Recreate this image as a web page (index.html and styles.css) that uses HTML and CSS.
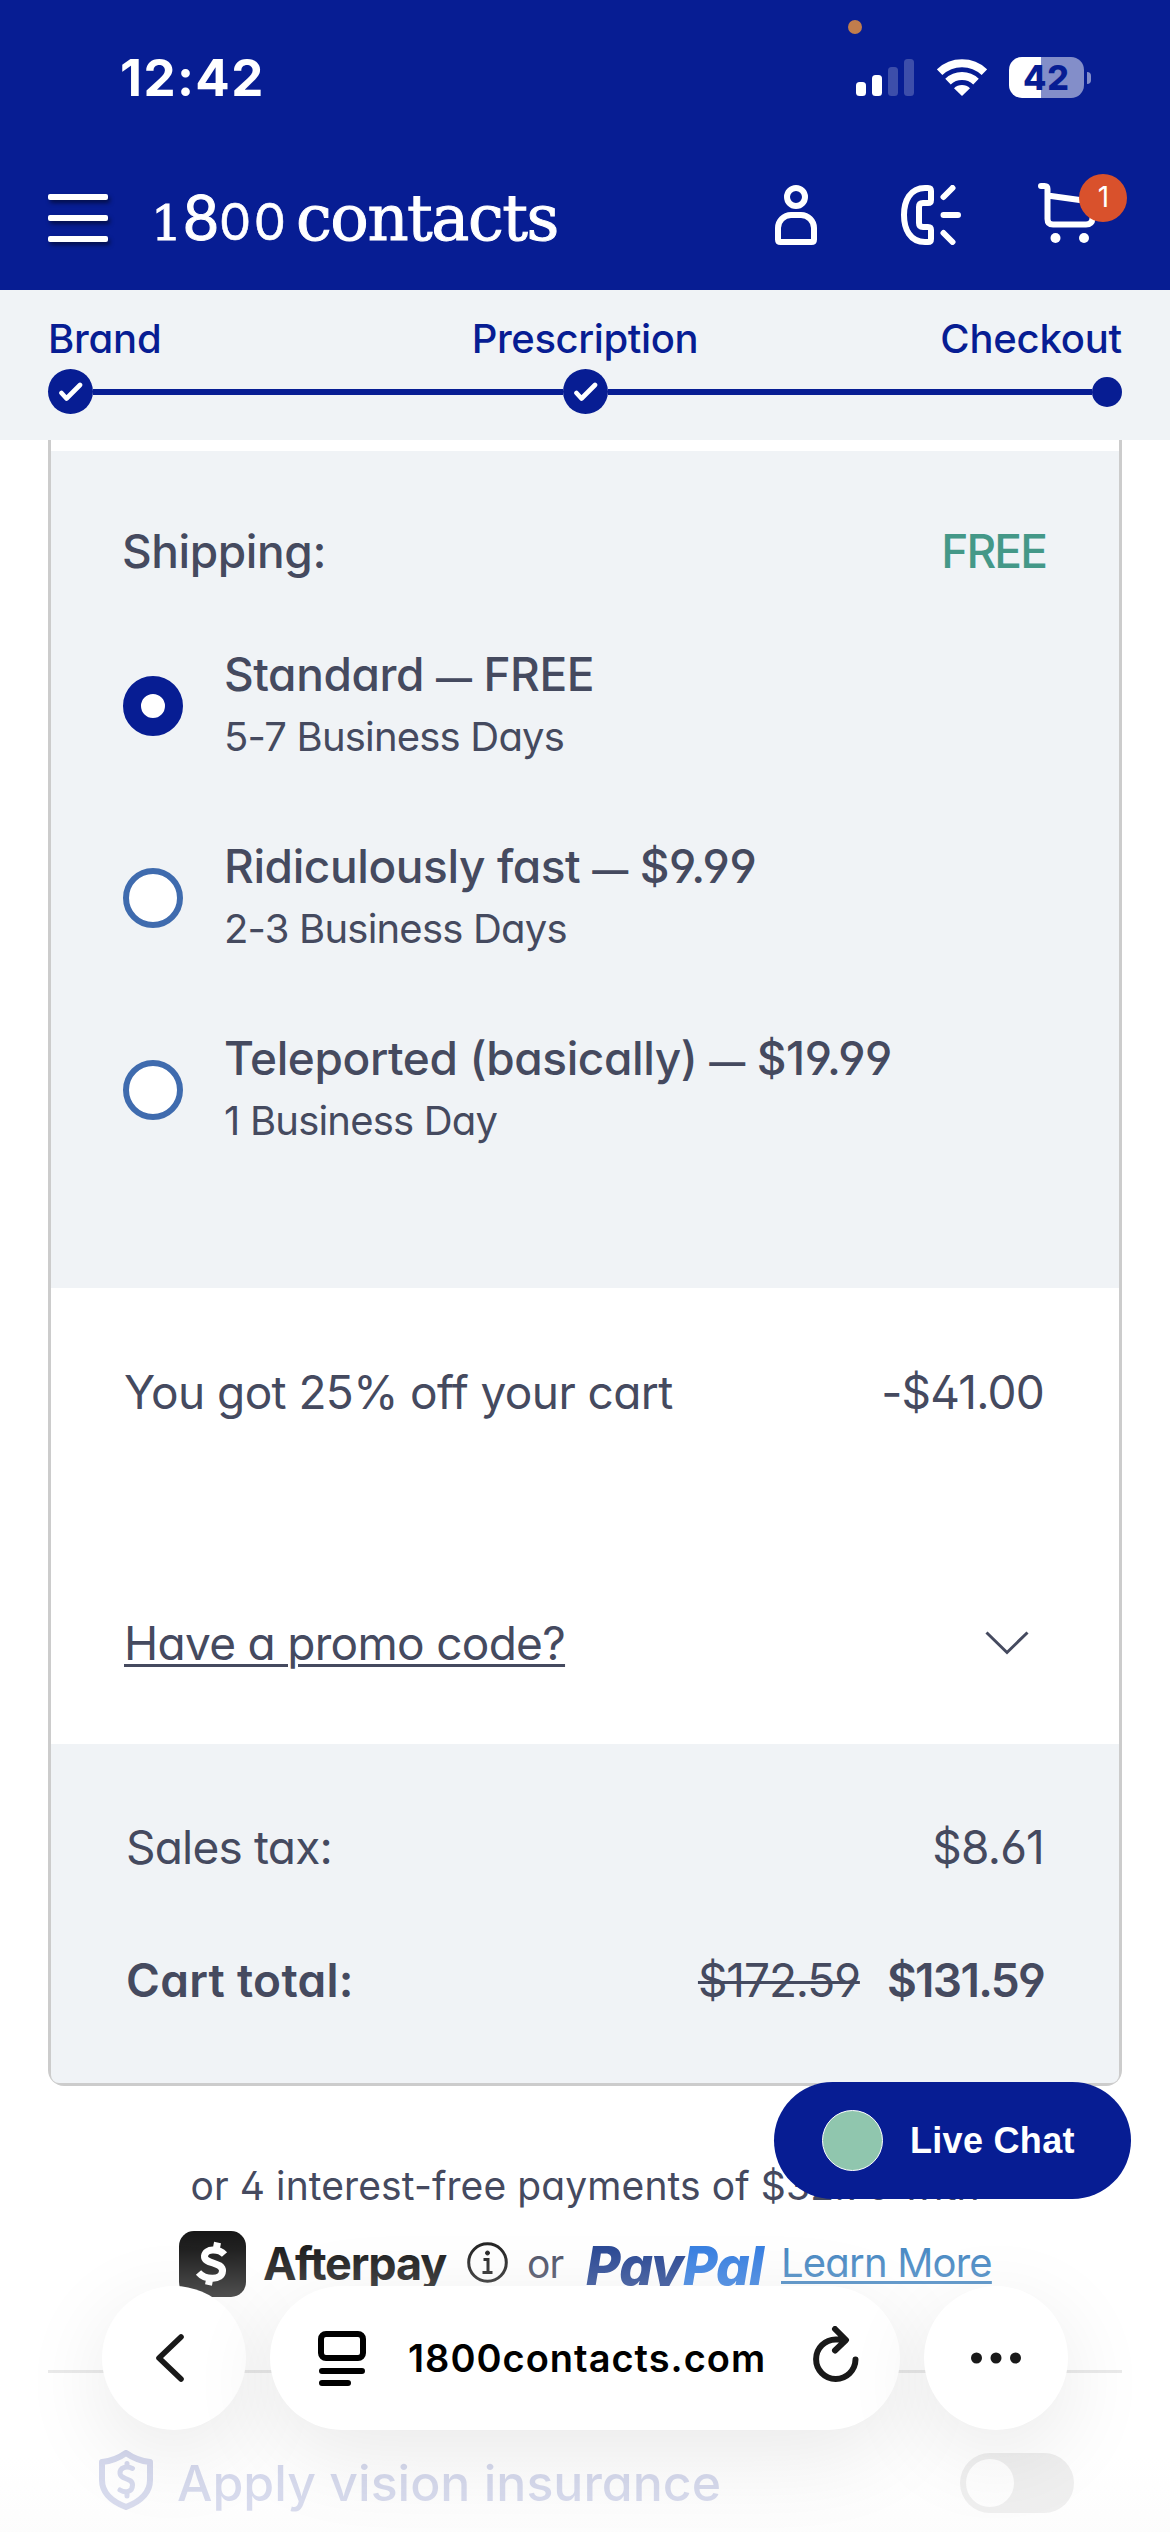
FILE: index.html
```html
<!DOCTYPE html>
<html lang="en">
<head>
<meta charset="utf-8">
<meta name="viewport" content="width=device-width">
<title>1800 contacts – Checkout</title>
<link rel="stylesheet" href="styles.css">
</head>
<body>
<div class="page">
  <header class="header">
    <span class="recording-dot"></span>
    <div class="status">
      <span class="status-time">12:42</span>
      <div class="status-icons">
        <svg width="59" height="37" viewBox="0 0 59 37" fill="#fff">
          <rect x="0" y="23" width="10" height="14" rx="3.5"/>
          <rect x="16" y="16" width="10" height="21" rx="3.5"/>
          <rect x="32" y="8" width="10" height="29" rx="3.5" opacity=".22"/>
          <rect x="48" y="0" width="10" height="37" rx="3.5" opacity=".22"/>
        </svg>
        <svg class="wifi" width="50" height="37" viewBox="0 0 50 37" fill="none" stroke="#fff" stroke-width="8">
          <path d="M2.6 13.2A32.5 32.5 0 0 1 47.4 13.2"/>
          <path d="M11 22.6A20.3 20.3 0 0 1 39 22.6"/>
          <path d="M25 37L17 29.2A11.5 11.5 0 0 1 33 29.2Z" fill="#fff" stroke="none"/>
        </svg>
        <div class="battery"><span class="battery-body">42</span><span class="battery-nub"></span></div>
      </div>
    </div>
    <nav class="nav">
      <div class="burger"><span></span><span></span><span></span></div>
      <div class="logo"><span class="logo-one">1</span><span class="logo-eight">8</span><span class="logo-zeros">00</span><span class="logo-word">contacts</span></div>
      <div class="nav-icons">
        <svg width="42" height="60" viewBox="0 0 42 60" fill="none" stroke="#fff" stroke-width="6">
          <circle cx="21" cy="12" r="9"/>
          <path d="M3 54.5V43a13 13 0 0 1 13-13h10a13 13 0 0 1 13 13v11.500q0 2.500-2.500 2.500h-31q-2.500 0-2.500-2.500z"/>
        </svg>
        <svg class="phone" width="60" height="60" viewBox="0 0 60 60" fill="none" stroke="#fff" stroke-width="6" stroke-linecap="round">
          <path d="M30 6q0-3-3-3h-3C9 3 3 16 3 30s6 27 21 27h3q3 0 3-3v-9q0-3-3-3h-5q-4 0-4-4V22q0-4 4-4h5q3 0 3-3z"/>
          <path d="M42.500 12l9-9M42.500 30H57M42.500 48l9 9"/>
        </svg>
        <div class="cart">
          <svg width="60" height="60" viewBox="0 0 60 60" fill="none" stroke="#fff" stroke-width="6" stroke-linecap="round" stroke-linejoin="round">
            <path d="M3 3h3.500q3 0 3 3v30q0 5.500 5.500 5.500h33q6 0 6.500-6L56 19 9.500 12.500"/>
            <g fill="#fff" stroke="none"><circle cx="17.500" cy="55" r="5"/><circle cx="46" cy="55" r="5"/></g>
          </svg>
          <span class="cart-count">1</span>
        </div>
      </div>
    </nav>
  </header>

  <section class="progress">
    <div class="progress-labels"><span>Brand</span><span class="label-mid">Prescription</span><span>Checkout</span></div>
    <div class="progress-track">
      <span class="step"><svg width="24" height="20" viewBox="0 0 24 20"><path d="M2.500 11l5 5.500L21 3" fill="none" stroke="#fff" stroke-width="4.600" stroke-linecap="round" stroke-linejoin="round"/></svg></span>
      <span class="line"></span>
      <span class="step"><svg width="24" height="20" viewBox="0 0 24 20"><path d="M2.500 11l5 5.500L21 3" fill="none" stroke="#fff" stroke-width="4.600" stroke-linecap="round" stroke-linejoin="round"/></svg></span>
      <span class="line"></span>
      <span class="step-current"></span>
    </div>
  </section>

  <main class="summary">
    <section class="shipping">
      <div class="row strong ship-head"><span>Shipping:</span><span class="free">FREE</span></div>
      <div class="options">
        <label class="option">
          <span class="radio checked"></span>
          <span class="option-text"><span class="option-name">Standard <span class="dash">—</span> FREE</span><span class="option-time">5-7 Business Days</span></span>
        </label>
        <label class="option">
          <span class="radio"></span>
          <span class="option-text"><span class="option-name">Ridiculously fast <span class="dash">—</span> $9.99</span><span class="option-time">2-3 Business Days</span></span>
        </label>
        <label class="option">
          <span class="radio"></span>
          <span class="option-text"><span class="option-name">Teleported (basically) <span class="dash">—</span> $19.99</span><span class="option-time">1 Business Day</span></span>
        </label>
      </div>
    </section>
    <section class="discounts">
      <div class="row offer"><span>You got 25% off your cart</span><span class="amount">-$41.00</span></div>
      <div class="row promo"><a class="promo-link">Have a promo code?</a>
        <svg class="chevron" width="44" height="24" viewBox="0 0 44 24"><path d="M1.500 1.500L22 21.500 42.500 1.500" fill="none" stroke="#454a5f" stroke-width="3"/></svg>
      </div>
    </section>
    <section class="totals">
      <div class="row"><span>Sales tax:</span><span>$8.61</span></div>
      <div class="row total"><span class="total-label">Cart total:</span><span class="prices"><s>$172.59</s><b>$131.59</b></span></div>
    </section>
  </main>

  <section class="financing">
    <p class="installments">or 4 interest-free payments of $32.90 with</p>
    <div class="providers">
      <svg class="cash" width="67" height="66" viewBox="0 0 67 66">
        <rect width="67" height="66" rx="15" fill="#111"/>
        <path d="M45.500 23.500C40 17.500 26.500 17 25.500 25c-.8 8.500 18.500 5.500 18 15-.5 9.500-17 9.500-24 1.500M38.500 11.500l-1.500 8M31 46l-1.500 8" fill="none" stroke="#fff" stroke-width="7"/>
      </svg>
      <span class="afterpay">Afterpay</span>
      <svg class="info" width="41" height="41" viewBox="0 0 41 41" fill="none" stroke="#1b1b1b" stroke-width="3">
        <circle cx="20.500" cy="20.500" r="18.800"/><path d="M16.500 17.500h4.500v13M15.500 30.500h10"/><circle cx="20.500" cy="11" r="2" fill="#1b1b1b" stroke-width="1"/>
      </svg>
      <span class="or">or</span>
      <span class="paypal">Pay<span>Pal</span></span>
      <a class="learn">Learn More</a>
    </div>
  </section>

  <section class="insurance">
    <svg class="shield" width="54" height="60" viewBox="0 0 54 60" fill="none" stroke="#071d93" stroke-linecap="round" stroke-linejoin="round">
      <path d="M27 3c7 5 14 8 24 9v18c0 14-11 22-24 27C14 52 3 44 3 30V12c10-1 17-4 24-9z" stroke-width="6"/>
      <path d="M33.500 18.500c-6-3-13-1-12.500 5 .5 6.500 12.500 4 12.500 11.500 0 7-7 8.500-12.500 5M28 13.500v3.500M28 42v4" stroke-width="5"/>
    </svg>
    <span class="insurance-label">Apply vision insurance</span>
    <span class="toggle"><span class="knob"></span></span>
  </section>

  <div class="fade"></div>
  <button class="chat"><span class="chat-dot"></span>Live Chat</button>

  <div class="browser-bar">
    <span class="round"><svg width="28" height="48" viewBox="0 0 28 48"><path d="M25 3L3 24l22 21" fill="none" stroke="#191919" stroke-width="5.600" stroke-linecap="round" stroke-linejoin="round"/></svg></span>
    <div class="address">
      <svg width="48" height="55" viewBox="0 0 48 55" fill="none" stroke="#000" stroke-width="6" stroke-linecap="round"><rect x="3" y="3" width="42" height="24" rx="5"/><path d="M4 40h40M4 52h26"/></svg>
      <span class="domain">1800contacts.com</span>
      <svg class="reload" width="46" height="56" viewBox="0 0 46 56" fill="none" stroke="#191919" stroke-width="6" stroke-linecap="round" stroke-linejoin="round"><path d="M42.500 33.500A19.700 19.700 0 1 1 22.800 13.500H32M22 3l11 11-11 10.500"/></svg>
    </div>
    <span class="round"><svg width="50" height="12" viewBox="0 0 50 12" fill="#191919"><circle cx="5.500" cy="6" r="5.500"/><circle cx="25" cy="6" r="5.500"/><circle cx="44.500" cy="6" r="5.500"/></svg></span>
  </div>
</div>
</body>
</html>
```
FILE: styles.css
```css
* { box-sizing: border-box; }

body {
  margin: 0;
  background: #fff;
  color: #454a5f;
  font: 400 46px/60px "Inter", "Liberation Sans", sans-serif;
  font-feature-settings: "cv11", "cv02", "cv03", "cv04";
  letter-spacing: -0.8px;
}

svg { display: block; flex: none; }

.page {
  position: relative;
  width: 1170px;
  height: 2532px;
  overflow: hidden;
  white-space: nowrap;
}

/* Header */
.header {
  position: relative;
  height: 290px;
  padding: 0 48px;
  background: #071d93;
  color: #fff;
}

.recording-dot {
  position: absolute;
  left: 848px;
  top: 20px;
  width: 14px;
  height: 14px;
  border-radius: 50%;
  background: #c17d4d;
}

.status {
  display: flex;
  align-items: center;
  justify-content: space-between;
  height: 155px;
  padding: 0 31px 0 72px;
}

.status-time {
  font-size: 51px;
  font-weight: 750;
  letter-spacing: 1.4px;
  font-feature-settings: normal;
}

.status-icons { display: flex; align-items: center; }
.wifi { margin: 0 22px; }
.battery { display: flex; align-items: center; gap: 3px; }

.battery-body {
  width: 75px;
  height: 41px;
  border-radius: 13px;
  background: linear-gradient(90deg, #fff 32px, #838ec9 32px);
  color: #071d93;
  font-size: 34px;
  line-height: 41px;
  font-weight: 800;
  letter-spacing: 1px;
  text-align: center;
  font-feature-settings: normal;
}

.battery-nub { width: 4px; height: 12px; border-radius: 0 4px 4px 0; background: #838ec9; }

.nav { display: flex; align-items: center; height: 120px; }
.burger { display: flex; flex-direction: column; gap: 15px; width: 60px; margin-top: 6px; }
.burger span { height: 6px; border-radius: 2px; background: #fff; box-shadow: 2px 3px 4px rgba(0, 0, 0, .5); }

.logo {
  display: flex;
  align-items: baseline;
  margin: 10px 0 0 43px;
  font: 400 64px/60px "DejaVu Serif", serif;
  -webkit-text-stroke: 1px #fff;
}
.logo-one { width: 32px; font-size: 49px; letter-spacing: 0; }
.logo-eight { width: 36px; font-family: Lato, sans-serif; font-size: 62px; letter-spacing: -1px; }
.logo-zeros { width: 77px; font-family: Inter, sans-serif; font-size: 51px; letter-spacing: 2.5px; -webkit-text-stroke-width: 0.6px; }
.logo-word { letter-spacing: -1.5px; }

.nav-icons { display: flex; align-items: center; margin-left: auto; }
.phone { margin: 0 77px 0 84px; }
.cart { position: relative; width: 84px; }
.cart svg { margin-top: -4px; }

.cart-count {
  position: absolute;
  left: 41px;
  top: -13px;
  width: 48px;
  height: 48px;
  border-radius: 50%;
  background: #d9512c;
  font-size: 28px;
  line-height: 46px;
  text-align: center;
}

/* Checkout progress */
.progress {
  height: 150px;
  padding: 24px 48px 0;
  background: #f0f3f6;
  color: #071d93;
}

.progress-labels {
  display: grid;
  grid-template-columns: 1fr auto 1fr;
  font-size: 40px;
  line-height: 50px;
  font-weight: 500;
  letter-spacing: -0.2px;
}
.label-mid { letter-spacing: -0.4px; }
.progress-labels span:last-child { text-align: right; }

.progress-track {
  display: grid;
  grid-template-columns: 45px 470px 45px 1fr 30px;
  align-items: center;
  margin-top: 5px;
}
.step { display: grid; place-items: center; height: 45px; border-radius: 50%; background: #071d93; }
.line { height: 6px; background: #071d93; }
.step-current { height: 30px; border-radius: 50%; background: #071d93; }

/* Order summary card */
.summary {
  margin: 0 48px;
  padding-top: 11px;
  border: solid #ccc;
  border-width: 0 3px 3px;
  border-radius: 0 0 16px 16px;
}

.row { display: flex; align-items: center; justify-content: space-between; height: 60px; }
.strong { font-weight: 500; letter-spacing: -0.4px; }

.shipping { height: 837px; padding: 70px 73px 0 72px; background: #f0f3f6; }
.ship-head { margin-left: -1px; }
.free { color: #449888; letter-spacing: -1.9px; }
.options { display: flex; flex-direction: column; gap: 67px; margin-top: 61px; }
.option { display: flex; align-items: center; gap: 41px; height: 125px; }

.radio {
  width: 60px;
  height: 60px;
  margin-top: 3px;
  border: 6px solid #3f6bae;
  border-radius: 50%;
  background: #fff;
}
.radio.checked { border: 18px solid #071d93; }

.option-text { display: flex; flex-direction: column; }
.option-name { height: 64px; font-weight: 500; line-height: 64px; letter-spacing: -0.4px; }
.dash { font-size: 36px; font-weight: 600; line-height: 1; }
.option-time { font-size: 40px; line-height: 61px; letter-spacing: -0.8px; }

.discounts { height: 456px; padding: 74px 75px 0 73px; }
.offer { letter-spacing: -0.6px; }
.amount { letter-spacing: -0.8px; }
.promo { margin-top: 191px; }
.promo-link { text-decoration: underline; text-decoration-thickness: 3px; text-underline-offset: 4px; letter-spacing: -0.7px; }
.chevron { margin-right: 15px; }

.totals { height: 339px; padding: 73px 75px 0; background: #f0f3f6; border-radius: 0 0 8px 8px; }
.total { margin-top: 73px; }
.total-label { font-weight: 600; letter-spacing: 0.3px; }
.prices { display: flex; gap: 27px; }
.prices s { text-decoration-thickness: 3px; letter-spacing: -1.1px; }
.prices b { font-weight: 600; letter-spacing: -1.7px; }

/* Pay-later offers */
.financing { margin-top: 65px; }
.installments { margin: 0; font-size: 39px; line-height: 70px; letter-spacing: 0.1px; text-align: center; }

.providers {
  display: flex;
  align-items: center;
  height: 66px;
  margin: 10px 0 0 179px;
}
.afterpay { width: 203px; margin-left: 17px; color: #111; font-size: 45px; font-weight: 650; letter-spacing: -1.1px; font-feature-settings: normal; }
.info { margin-left: 1px; margin-top: -3px; }
.or { width: 59px; margin-left: 19px; font-size: 39px; margin-top: -1px; }
.paypal { width: 195px; color: #1f3f8f; font-size: 53px; font-style: italic; font-weight: 800; margin-top: 4px; letter-spacing: -0.9px; }
.paypal span { color: #2d79e0; }
.learn { margin-top: -2px; color: #3d82c0; font-size: 40px; letter-spacing: -0.8px; text-decoration: underline; text-decoration-thickness: 3px; text-underline-offset: 4px; }

/* Insurance row */
.insurance {
  display: flex;
  align-items: center;
  margin: 73px 48px 0;
  padding: 77px 48px 0 51px;
  border-top: 3px solid #ccc;
  line-height: 66px;
}
.shield { margin-top: -6px; }
.insurance-label { margin-left: 24px; color: #071d93; font-size: 50px; font-weight: 500; letter-spacing: 0; }
.toggle { width: 114px; height: 60px; margin-left: auto; padding: 6px; border-radius: 30px; background: #a0a0a0; }
.knob { display: block; width: 48px; height: 48px; border-radius: 50%; background: #fff; }

.fade {
  position: absolute;
  inset: 2222px 0 0;
  background: linear-gradient(rgba(255, 255, 255, 0) 0, rgba(255, 255, 255, .07) 28px, rgba(255, 255, 255, .27) 76px, rgba(255, 255, 255, .6) 150px, rgba(255, 255, 255, .83) 235px, rgba(252, 252, 252, .86) 310px);
}

.chat {
  position: absolute;
  left: 774px;
  top: 2082px;
  display: flex;
  align-items: center;
  gap: 27px;
  width: 357px;
  height: 117px;
  padding: 0 0 0 48px;
  border: 0;
  border-radius: 59px;
  background: #071d93;
  color: #fff;
  font: 700 36px/50px "Liberation Sans", Arial, sans-serif;
  letter-spacing: 0.3px;
}
.chat-dot { width: 61px; height: 61px; border: 1px solid #fff; border-radius: 50%; background: #90c6ae; }

/* Floating browser controls */
.browser-bar {
  position: absolute;
  left: 102px;
  top: 2286px;
  display: flex;
  gap: 24px;
  height: 144px;
}
.round, .address {
  display: flex;
  align-items: center;
  border-radius: 72px;
  background: #fff;
  box-shadow: 0 24px 90px rgba(0, 0, 0, .09);
}
.round { justify-content: center; width: 144px; }
.round:first-child svg { margin-right: 8px; }
.address { width: 630px; padding-left: 48px; }
.domain { width: 405px; margin-left: 42px; color: #000; font-size: 38px; font-weight: 600; letter-spacing: 1px; font-feature-settings: normal; }
.reload { margin-top: -8px; }
```
